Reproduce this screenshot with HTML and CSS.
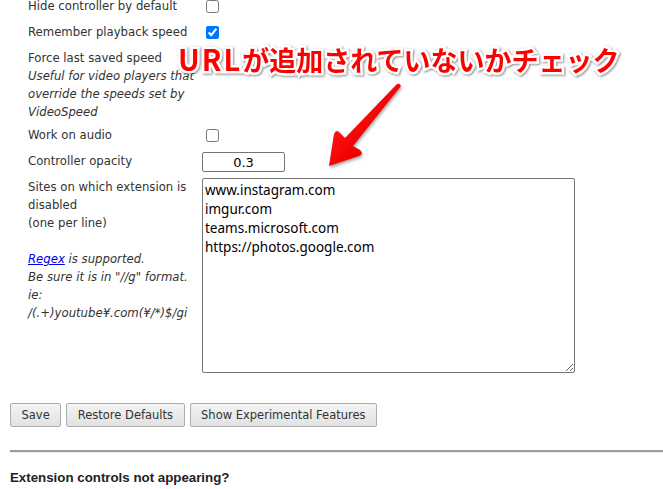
FILE: index.html
```html
<!DOCTYPE html>
<html lang="ja">
<head>
<meta charset="utf-8">
<title>Video Speed Controller Options</title>
<link rel="stylesheet" href="styles.css">
</head>
<body>
<div class="page">
  <div class="options">
    <div class="row">
      <div class="label">Hide controller by default</div>
      <div class="control"><input type="checkbox" class="check"></div>
    </div>
    <div class="row">
      <div class="label">Remember playback speed</div>
      <div class="control"><input type="checkbox" class="check" checked></div>
    </div>
    <div class="row">
      <div class="label">Force last saved speed<br>
        <em class="note">Useful for video players that override the speeds set by VideoSpeed</em></div>
      <div class="control"></div>
    </div>
    <div class="row">
      <div class="label">Work on audio</div>
      <div class="control"><input type="checkbox" class="check"></div>
    </div>
    <div class="row">
      <div class="label">Controller opacity</div>
      <div class="control"><input type="text" class="opacity" value="0.3"></div>
    </div>
    <div class="row">
      <div class="label">Sites on which extension is disabled<br>(one per line)<br><br>
        <a href="#" class="link">Regex</a> <em class="note">is supported.<br>Be sure it is in "//g" format.<br>ie:<br>/(.+)youtube¥.com(¥/*)$/gi</em></div>
      <div class="control"><textarea class="sites">www.instagram.com
imgur.com
teams.microsoft.com
https://photos.google.com</textarea></div>
    </div>
  </div>

  <div class="buttons">
    <button class="btn">Save</button>
    <button class="btn">Restore Defaults</button>
    <button class="btn">Show Experimental Features</button>
  </div>

  <hr class="divider">

  <h4 class="faq">Extension controls not appearing?</h4>
</div>

<div class="callout"><span class="latin">URL</span>が追加されていないかチェック</div>
<svg class="arrow" width="90" height="90" viewBox="0 0 90 90" aria-hidden="true">
  <defs>
    <linearGradient id="ag" x1="0" y1="0" x2="1" y2="1">
      <stop offset="0" stop-color="#ff2a2a"/>
      <stop offset="0.6" stop-color="#f20000"/>
      <stop offset="1" stop-color="#d40000"/>
    </linearGradient>
  </defs>
  <path d="M76 5 Q79 2 81 6 L33 66 L40 70 Q44 74 39 76 L9 86 L14 54 Q16 49 19 52 L25 58 Z" fill="url(#ag)"/>
</svg>
</body>
</html>
```

FILE: styles.css
```css
html, body {
  margin: 0;
  padding: 0;
  background: #ffffff;
}

body {
  font-family: "DejaVu Sans", Verdana, sans-serif;
  font-size: 11.7px;
  color: #333333;
  position: relative;
  overflow: hidden;
  height: 489px;
}

.page {
  padding-left: 10px;
}

.options {
  margin-top: -3px;
}

.row {
  display: flex;
  align-items: flex-start;
  margin-left: 18px;
  min-height: 21px;
  margin-bottom: 5px;
}

.label {
  width: 174px;
  flex: none;
  line-height: 18px;
}

.note {
  font-style: italic;
}

.link {
  color: #0000ee;
  text-decoration: underline;
  font-style: italic;
}

.control {
  flex: none;
}

.check {
  width: 13px;
  height: 13px;
  margin: 3px 3px 3px 4px;
  display: block;
}

.opacity {
  box-sizing: border-box;
  width: 83px;
  height: 20px;
  border: 1px solid #767676;
  border-radius: 2px;
  padding: 0;
  text-align: center;
  font-family: "DejaVu Sans", sans-serif;
  font-size: 13px;
  color: #000;
  display: block;
}

.sites {
  box-sizing: border-box;
  display: block;
  width: 373px;
  height: 195px;
  border: 1px solid #767676;
  border-radius: 2px;
  padding: 2px 2px;
  margin: 0;
  font-family: "Noto Sans", sans-serif;
  font-size: 13.5px;
  line-height: 19px;
  color: #000;
  resize: both;
}

.buttons {
  display: flex;
  gap: 5px;
  margin-top: 30px;
}

.btn {
  box-sizing: border-box;
  height: 24px;
  padding: 0 10.5px;
  margin: 0;
  border: 1px solid #adadad;
  border-radius: 2px;
  background: linear-gradient(#f3f3f3, #e2e2e2);
  font-family: "DejaVu Sans", sans-serif;
  font-size: 11.5px;
  color: #333;
}

.divider {
  margin: 23px 0 0 0;
  border: 0;
  border-top: 2px solid #9c9c9c;
  border-bottom: 1px solid #eeeeee;
  height: 0;
}

.faq {
  margin: 17px 0 0 0;
  font-family: "Liberation Sans", Arial, sans-serif;
  font-weight: bold;
  font-size: 13.3px;
  color: #222;
}

.callout {
  position: absolute;
  left: 178px;
  top: 40px;
  font-family: "Noto Sans CJK JP", sans-serif;
  font-weight: 700;
  font-size: 27px;
  line-height: 36px;
  color: #ff0000;
  white-space: nowrap;
  -webkit-text-stroke: 5px #ffffff;
  paint-order: stroke fill;
  filter: drop-shadow(1px 1px 1px rgba(0,0,0,0.45));
}

.latin {
  font-size: 29px;
  letter-spacing: 2px;
}

.arrow {
  position: absolute;
  left: 320px;
  top: 80px;
  filter: drop-shadow(1px 2px 1.5px rgba(0,0,0,0.35));
}
```
